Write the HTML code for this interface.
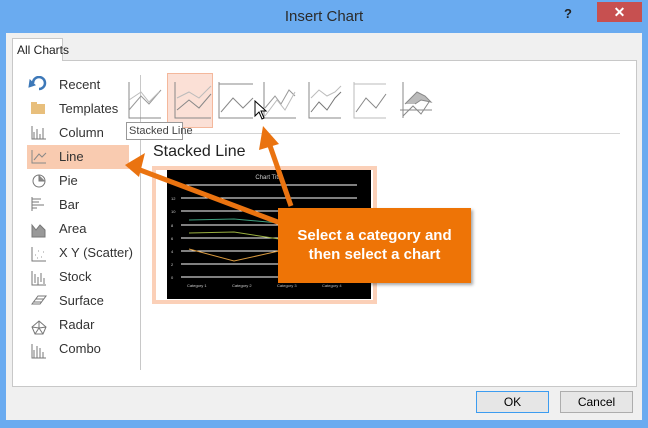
<!DOCTYPE html>
<html><head><style>
*{margin:0;padding:0;box-sizing:border-box}
body{width:648px;height:428px;overflow:hidden;background:#6aabf0;font-family:"Liberation Sans",sans-serif;position:relative}
.a{position:absolute;white-space:nowrap}
.t{font-size:13px;color:#333;left:59px;line-height:14px}
</style></head><body>
<div class="a" style="left:0;top:0;width:648px;height:33px;text-align:center;font-size:15px;line-height:33px;color:#2b2b2b">Insert Chart</div>
<div class="a" style="left:564px;top:6px;font-size:13px;font-weight:bold;color:#222">?</div>
<div class="a" style="left:597px;top:2px;width:45px;height:20px;background:#c75050;color:#fff;text-align:center;font-size:14px;line-height:20px;font-weight:bold">✕</div>
<div class="a" style="left:6px;top:33px;width:636px;height:387px;background:#f0f0f0"></div>
<div class="a" style="left:12px;top:60px;width:625px;height:327px;background:#fff;border:1px solid #c8c8c8"></div>
<div class="a" style="left:12px;top:38px;width:51px;height:23px;background:#fff;border:1px solid #c8c8c8;border-bottom:none;font-size:12px;line-height:22px;padding-left:4px;color:#222">All Charts</div>
<div class="a" style="left:140px;top:75px;width:1px;height:295px;background:#c8c8c8"></div>
<div class="a" style="left:27px;top:145px;width:102px;height:24px;background:#f9cbb0"></div>
<div class="a t" style="top:78px">Recent</div>
<div class="a t" style="top:102px">Templates</div>
<div class="a t" style="top:126px">Column</div>
<div class="a t" style="top:150px">Line</div>
<div class="a t" style="top:174px">Pie</div>
<div class="a t" style="top:198px">Bar</div>
<div class="a t" style="top:222px">Area</div>
<div class="a t" style="top:246px">X Y (Scatter)</div>
<div class="a t" style="top:270px">Stock</div>
<div class="a t" style="top:294px">Surface</div>
<div class="a t" style="top:318px">Radar</div>
<div class="a t" style="top:342px">Combo</div>
<svg class="a" style="left:28px;top:76px" width="22" height="290" fill="none" stroke="#777" stroke-width="1">
<path d="M5 7 A6 6 0 1 1 11 13" stroke="#3d78b8" stroke-width="2.5"/><path d="M2 4 L7 9 L1 11Z" fill="#3d78b8" stroke="#3d78b8"/>
<rect x="3" y="28" width="14" height="10" fill="#e8bf7c" stroke="none"/><rect x="3" y="26" width="6" height="3" fill="#e8bf7c" stroke="none"/>
<path d="M4 50v13h14M6 56v7M9 53v10M12 58v5M15 52v11"/>
<path d="M4 74v13h14M6 84l5-6 3 3 4-4" stroke="#888"/>
<circle cx="11" cy="105" r="6"/><path d="M11 99v6h6" fill="#888"/>
<path d="M4 121v14M4 123h9M4 126h7M4 129h12M4 132h5"/>
<path d="M4 149l4 5 4-5 5 5v7H4z" fill="#999" stroke="#777"/>
<path d="M4 171v14h14"/><path d="M7 179h1M10 175h1M13 181h1M9 182h1M15 176h1" stroke="#999"/>
<path d="M4 195v14h14M7 198v9M10 201v8M13 197v9M16 202v6"/>
<path d="M4 228l6-8h8l-6 8z M6 226h8M8 223h8"/>
<path d="M11 245l7 6-3 7h-8l-3-7z M11 245v7l7-1M11 252l4 6M11 252l-4 6M11 252l-7-1"/>
<path d="M4 268v14h14M6 274v8M9 270v12M12 272v10M15 276v6"/>
</svg>
<div class="a" style="left:167px;top:73px;width:46px;height:55px;background:#fbe0d6;border:1px solid #f4b89c"></div>
<svg class="a" style="left:125px;top:80px" width="320" height="42" fill="none" stroke="#888" stroke-width="1">
<path d="M4 2v36h32"/><path d="M4 30l12-14 8 8 12-14" stroke="#999"/><path d="M4 20l12-8 8 10 10-10" stroke="#bbb"/>
<path d="M50 2v36h36"/><path d="M52 30l12-10 10 8 12-14"/><path d="M52 18l12-6 10 6 12-12" stroke="#bbb"/>
<path d="M94 2v36h34M94 4h34"/><path d="M96 32l12-14 10 10 10-10"/>
<path d="M139 2v36h32"/><path d="M140 28l10-12 6 8 8-14 6 6" stroke="#999"/><path d="M140 36l12-16 8 10 10-18" stroke="#bbb"/>
<path d="M184 2v36h32"/><path d="M186 32l8-10 8 8 8-12 6-6" stroke="#777"/><path d="M186 18l8-8 8 6 8-4 6-6" stroke="#bbb"/>
<path d="M229 2v36h32M229 4h32" stroke="#bbb"/><path d="M231 32l10-14 10 10 10-14"/>
<path d="M278 2v36M275 30h32"/><path d="M280 24l12-12 8 4 6 6-10-2-6 4" fill="#bbb"/><path d="M278 36l10-10 8 8 8-12"/>
</svg>
<div class="a" style="left:153px;top:133px;width:467px;height:1px;background:#d4d4d4"></div>
<div class="a" style="left:126px;top:122px;width:57px;height:18px;background:#fff;border:1px solid #999;font-size:11px;line-height:16px;padding-left:2px;color:#444">Stacked Line</div>
<svg class="a" style="left:254px;top:100px" width="14" height="22"><path d="M1 1v15l4-4 3 7 2-1-3-7h5z" fill="#fff" stroke="#000"/></svg>
<div class="a" style="left:153px;top:143px;font-size:16px;color:#222">Stacked Line</div>
<div class="a" style="left:152px;top:166px;width:225px;height:138px;border:4px solid #fbd0b8;background:#fff"></div>
<svg class="a" style="left:167px;top:170px" width="204" height="129">
<rect width="204" height="129" fill="#000"/>
<text x="102" y="9" fill="#ccc" font-size="6" text-anchor="middle">Chart Title</text>
<g stroke="#fff" stroke-width="1"><path d="M14 15h176M14 28h176M14 41h176M14 55h176M14 68h176M14 81h176M14 94h176M14 107h176"/></g>
<g fill="#ccc" font-size="4"><text x="4" y="30">12</text><text x="4" y="43">10</text><text x="4" y="57">8</text><text x="4" y="70">6</text><text x="4" y="83">4</text><text x="4" y="96">2</text><text x="4" y="109">0</text>
<text x="20" y="117">Category 1</text><text x="65" y="117">Category 2</text><text x="110" y="117">Category 3</text><text x="155" y="117">Category 4</text></g>
<path d="M22 79l45 12 45-10" stroke="#d89a40" fill="none"/>
<path d="M22 63l45-1 45 7" stroke="#9ab040" fill="none"/>
<path d="M22 50l45-1 45 4 38-11" stroke="#40a080" fill="none"/>
</svg>
<svg class="a" style="left:0;top:0" width="648" height="428">
<g stroke="#ea7310" stroke-width="5" fill="#ea7310">
<path d="M283 224L140 170"/><path d="M125 165l20-12-6 24z" stroke="none"/>
<path d="M291 206L268 140"/><path d="M263 126l16 18-20 6z" stroke="none"/></g>
</svg>
<div class="a" style="left:278px;top:208px;width:193px;height:75px;background:#ee7406;box-shadow:2px 2px 3px rgba(0,0,0,.35);color:#fff;font-weight:bold;font-size:15px;text-align:center;line-height:19px;padding-top:18px">Select a category and<br>then select a chart</div>
<div class="a" style="left:476px;top:391px;width:73px;height:22px;border:1px solid #3c9cf0;background:#e6e6e6;font-size:12px;text-align:center;line-height:20px">OK</div>
<div class="a" style="left:560px;top:391px;width:73px;height:22px;border:1px solid #adadad;background:#e6e6e6;font-size:12px;text-align:center;line-height:20px">Cancel</div>
</body></html>
